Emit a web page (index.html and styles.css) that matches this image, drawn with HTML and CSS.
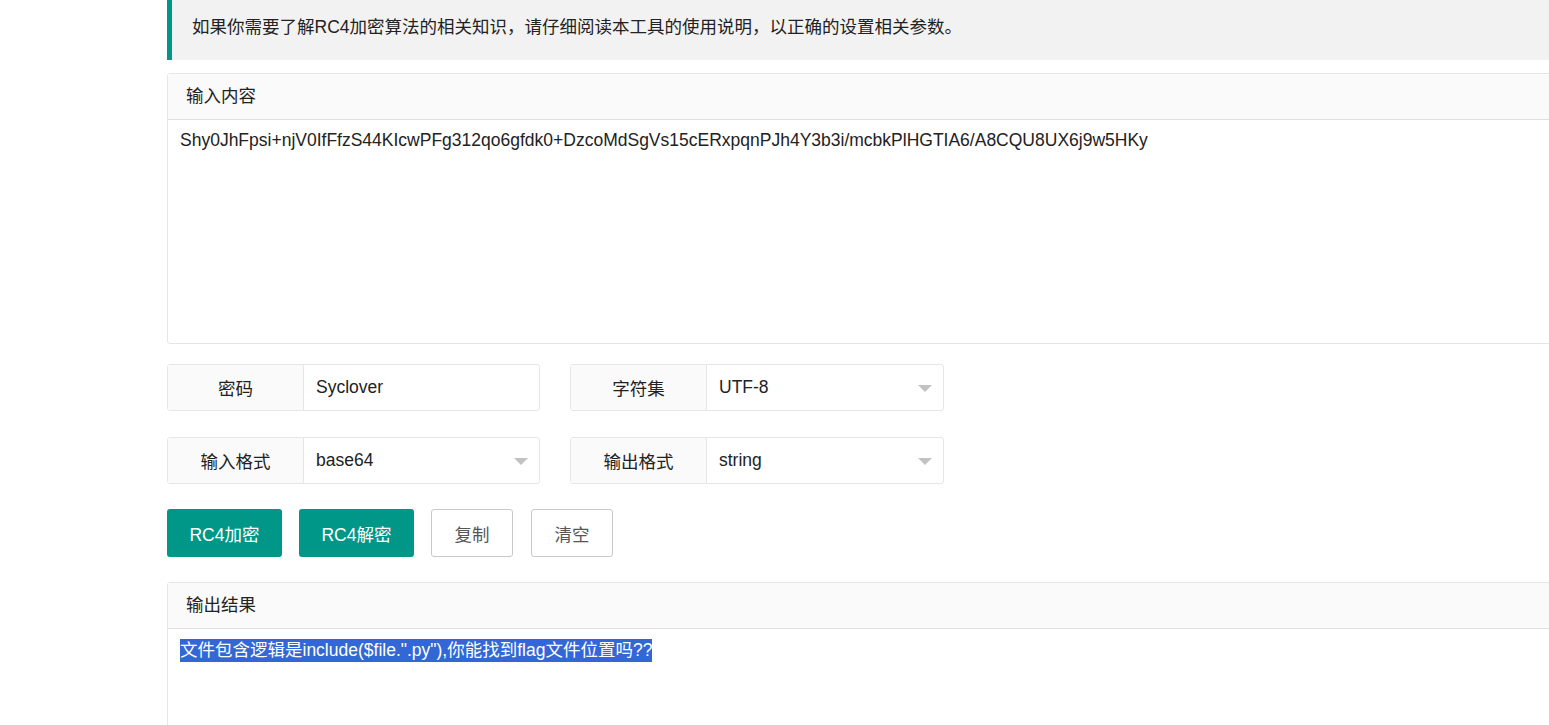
FILE: index.html
```html
<!DOCTYPE html>
<html lang="zh">
<head>
<meta charset="utf-8">
<title>RC4</title>
<link rel="stylesheet" href="styles.css">
</head>
<body>
<div class="main">
  <div class="quote">如果你需要了解RC4加密算法的相关知识，请仔细阅读本工具的使用说明，以正确的设置相关参数。</div>

  <div class="card">
    <div class="card-header">输入内容</div>
    <div class="textarea">Shy0JhFpsi+njV0IfFfzS44KIcwPFg312qo6gfdk0+DzcoMdSgVs15cERxpqnPJh4Y3b3i/mcbkPlHGTIA6/A8CQU8UX6j9w5HKy</div>
  </div>

  <div class="form-row row-first">
    <div class="field">
      <div class="label">密码</div>
      <div class="input">Syclover</div>
    </div>
    <div class="field">
      <div class="label">字符集</div>
      <div class="input select">UTF-8<span class="arrow"></span></div>
    </div>
  </div>

  <div class="form-row">
    <div class="field">
      <div class="label">输入格式</div>
      <div class="input select">base64<span class="arrow"></span></div>
    </div>
    <div class="field">
      <div class="label">输出格式</div>
      <div class="input select">string<span class="arrow"></span></div>
    </div>
  </div>

  <div class="buttons">
    <div class="btn btn-primary">RC4加密</div>
    <div class="btn btn-primary">RC4解密</div>
    <div class="btn btn-plain">复制</div>
    <div class="btn btn-plain">清空</div>
  </div>

  <div class="card card-out">
    <div class="card-header">输出结果</div>
    <div class="output"><span class="sel">文件包含逻辑是include($file.".py"),你能找到flag文件位置吗??</span></div>
  </div>
</div>
</body>
</html>
```

FILE: styles.css
```css
html, body {
  margin: 0;
  padding: 0;
  overflow: hidden;
  background: #fff;
}
body {
  font-family: "Liberation Sans", Arial, "Noto Sans CJK SC", sans-serif;
  font-size: 17.5px;
  color: #333;
  height: 725px;
}
.main {
  margin-left: 167px;
  width: 1500px;
}
.quote {
  height: 60px;
  box-sizing: border-box;
  background: #f2f2f2;
  border-left: 5px solid #009688;
  padding: 16px 0 0 20px;
  line-height: 22px;
  color: #222;
  font-size: 17.5px;
}
.card {
  margin-top: 13px;
  border: 1px solid #e6e6e6;
  border-radius: 3px;
  background: #fff;
}
.card-header {
  height: 45px;
  line-height: 45px;
  padding-left: 18px;
  background: #fafafa;
  border-bottom: 1px solid #e0e0e0;
  color: #222;
}
.textarea {
  height: 223px;
  box-sizing: border-box;
  padding: 9px 12px;
  line-height: 22px;
  color: #222;
}
.form-row {
  display: flex;
  gap: 30px;
  margin-top: 26px;
}
.form-row.row-first {
  margin-top: 20px;
}
.field {
  display: flex;
  height: 47px;
  box-sizing: border-box;
  border: 1px solid #e6e6e6;
  border-radius: 3px;
}
.label {
  width: 135px;
  background: #fafafa;
  border-right: 1px solid #e6e6e6;
  display: flex;
  align-items: center;
  justify-content: center;
  color: #222;
}
.input {
  width: 223px;
  padding-left: 12px;
  display: flex;
  align-items: center;
  position: relative;
  color: #222;
}
.field + .field .input {
  width: 224px;
}
.arrow {
  position: absolute;
  right: 11px;
  top: 20px;
  width: 0;
  height: 0;
  border-left: 7px solid transparent;
  border-right: 7px solid transparent;
  border-top: 7px solid #c2c2c2;
}
.buttons {
  display: flex;
  gap: 17px;
  margin-top: 25px;
}
.btn {
  height: 48px;
  box-sizing: border-box;
  display: flex;
  align-items: center;
  justify-content: center;
  border-radius: 3px;
}
.btn-primary {
  width: 115px;
  background: #009688;
  color: #fff;
}
.btn-plain {
  width: 82px;
  border: 1px solid #c9c9c9;
  color: #555;
  background: #fff;
}
.btn-plain + .btn-plain {
  margin-left: 1px;
}
.card-out {
  margin-top: 25px;
}
.output {
  height: 120px;
  padding: 9px 12px;
  line-height: 25px;
}
.sel {
  background: #3367d6;
  color: #fff;
  padding: 1px 0 2px;
}
```
